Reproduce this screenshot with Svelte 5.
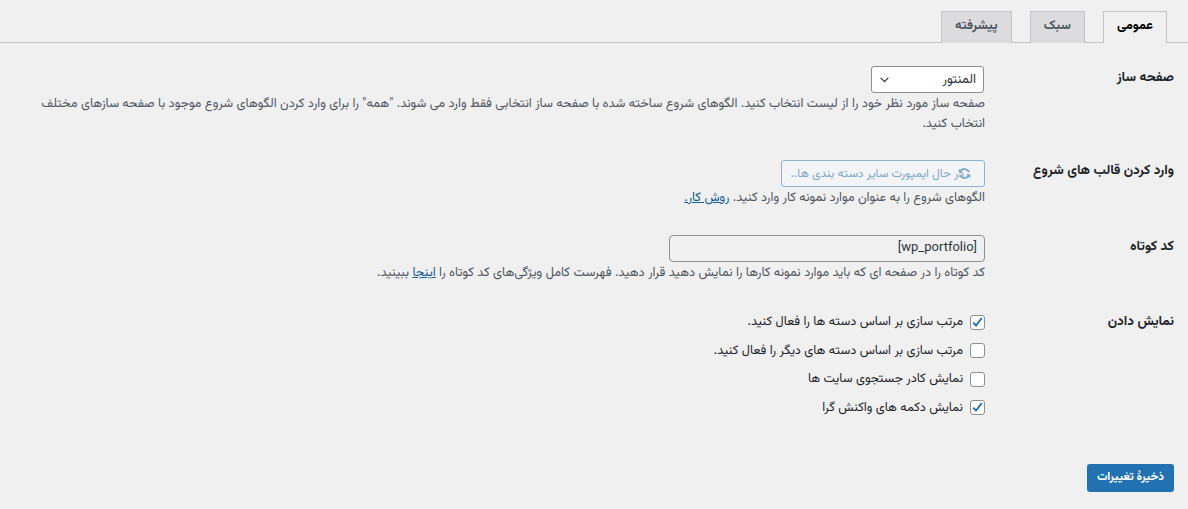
<script>
  const checks = [
    { label: 'مرتب سازی بر اساس دسته ها را فعال کنید.', on: true },
    { label: 'مرتب سازی بر اساس دسته های دیگر را فعال کنید.', on: false },
    { label: 'نمایش کادر جستجوی سایت ها', on: false },
    { label: 'نمایش دکمه های واکنش گرا', on: true }
  ];
</script>

<div class="page" dir="rtl">
  <nav class="tabs">
    <span class="tab active">عمومی</span>
    <span class="tab">سبک</span>
    <span class="tab">پیشرفته</span>
  </nav>

  <section class="row r1">
    <div class="label">صفحه ساز</div>
    <div class="field">
      <div class="select">
        <span>المنتور</span>
        <svg width="9" height="6" viewBox="0 0 9 6"><path d="M.7.8l3.8 3.8L8.3.8" fill="none" stroke="#2c3338" stroke-width="1.2"/></svg>
      </div>
      <p class="desc">صفحه ساز مورد نظر خود را از لیست انتخاب کنید. الگوهای شروع ساخته شده با صفحه ساز انتخابی فقط وارد می شوند. "همه" را برای وارد کردن الگوهای شروع موجود با صفحه سازهای مختلف انتخاب کنید.</p>
    </div>
  </section>

  <section class="row r2">
    <div class="label">وارد کردن قالب های شروع</div>
    <div class="field">
      <div class="btn">
        <span class="btn-text">در حال ایمپورت سایر دسته بندی ها..</span>
        <svg class="spin" width="13" height="13" viewBox="0 0 16 16"><path d="M13.5 6.5A6 6 0 0 0 3 5M2.5 9.5A6 6 0 0 0 13 11" fill="none" stroke="#7fa8c9" stroke-width="2.4"/><path d="M1 2v5h5zM15 14V9h-5z" fill="#7fa8c9"/></svg>
      </div>
      <p class="desc">الگوهای شروع را به عنوان موارد نمونه کار وارد کنید. <a href="#top">روش کار.</a></p>
    </div>
  </section>

  <section class="row r3">
    <div class="label">کد کوتاه</div>
    <div class="field">
      <div class="code" dir="ltr">[wp_portfolio]</div>
      <p class="desc">کد کوتاه را در صفحه ای که باید موارد نمونه کارها را نمایش دهید قرار دهید. فهرست کامل ویژگی‌های کد کوتاه را <a href="#top">اینجا</a> ببینید.</p>
    </div>
  </section>

  <section class="row r4">
    <div class="label">نمایش دادن</div>
    <div class="field checks">
      {#each checks as c}
        <div class="check">
          <span class="box">
            {#if c.on}
              <svg width="13" height="13" viewBox="0 0 13 13"><path d="M2.2 6.6l2.8 3L10.8 2" fill="none" stroke="#2271b1" stroke-width="1.9"/></svg>
            {/if}
          </span>
          <span>{c.label}</span>
        </div>
      {/each}
    </div>
  </section>

  <footer class="foot">
    <span class="save">ذخیرهٔ تغییرات</span>
  </footer>
</div>

<style>
  :global(body) { margin: 0; background: #f0f0f1; }
  .page { width: 1188px; height: 509px; overflow: hidden; box-sizing: border-box; padding: 0 14px; font: 400 13px/20px Vazirmatn, "Noto Sans", "DejaVu Sans", sans-serif; color: #2c3338; background: #f0f0f1; }
  .tabs { display: flex; gap: 18px; height: 43px; align-items: flex-end; margin: 0 -14px; padding: 0 21px; border-bottom: 1px solid #c3c4c7; box-sizing: border-box; }
  .tab { height: 32px; padding: 0 13px; background: #dcdcde; border: 1px solid #c3c4c7; border-bottom: 0; box-sizing: border-box; font-weight: 700; font-size: 13px; line-height: 28px; color: #50575e; margin-bottom: -1px; }
  .tab.active { background: #f0f0f1; color: #000; }
  .row { display: grid; grid-template-columns: 189px 1fr; }
  .label { font-weight: 700; font-size: 13.5px; color: #1d2327; }
  .field { min-width: 0; }
  .r1 { padding-top: 23px; }
  .r1 .label { padding-top: 2px; }
  .r2 { padding-top: 26px; }
  .r2 .label { padding-top: 1px; }
  .r3 { padding-top: 26px; }
  .r3 .label { padding-top: 2px; }
  .r4 { padding-top: 25px; }
  .r4 .label { padding-top: 4px; }
  .select { width: 113px; height: 27px; margin-right: 1px; box-sizing: border-box; border: 1px solid #8c8f94; border-radius: 3px; background: #fff; display: flex; justify-content: space-between; align-items: center; padding: 0 7px 0 8px; font-size: 13px; color: #2c3338; }
  .desc { margin: 2px 0 0; font-size: 12.75px; line-height: 19.5px; color: #50575e; }
  .desc a { color: #135e96; text-decoration: underline; }
  .btn { width: 204px; height: 27px; box-sizing: border-box; border: 1px solid #8fb3d1; border-radius: 3px; background: #f3f4f6; display: flex; align-items: center; padding: 0 20px 0 10px; font-size: 12px; color: #7fa8c9; white-space: nowrap; position: relative; }
  .spin { position: absolute; right: 13px; top: 6px; }
  .code { width: 316px; height: 27px; box-sizing: border-box; border: 1px solid #8c8f94; border-radius: 4px; background: #f0f0f1; text-align: right; padding: 0 7px; line-height: 25px; font-size: 13px; color: #2c3338; }
  .checks { display: flex; flex-direction: column; gap: 7.5px; padding-top: 3.5px; }
  .check { display: flex; align-items: center; gap: 7px; height: 21px; font-size: 12.7px; color: #1d2327; }
  .box { width: 15px; height: 15px; box-sizing: border-box; border: 1px solid #8c8f94; border-radius: 3px; background: #fff; display: flex; align-items: center; justify-content: center; }
  .box svg { flex: none; }
  .foot { padding-top: 46px; }
  .save { display: inline-block; width: 87px; height: 28px; background: #2271b1; color: #fff; text-align: center; border-radius: 3px; font-size: 11.6px; font-weight: 700; line-height: 27px; }
</style>
